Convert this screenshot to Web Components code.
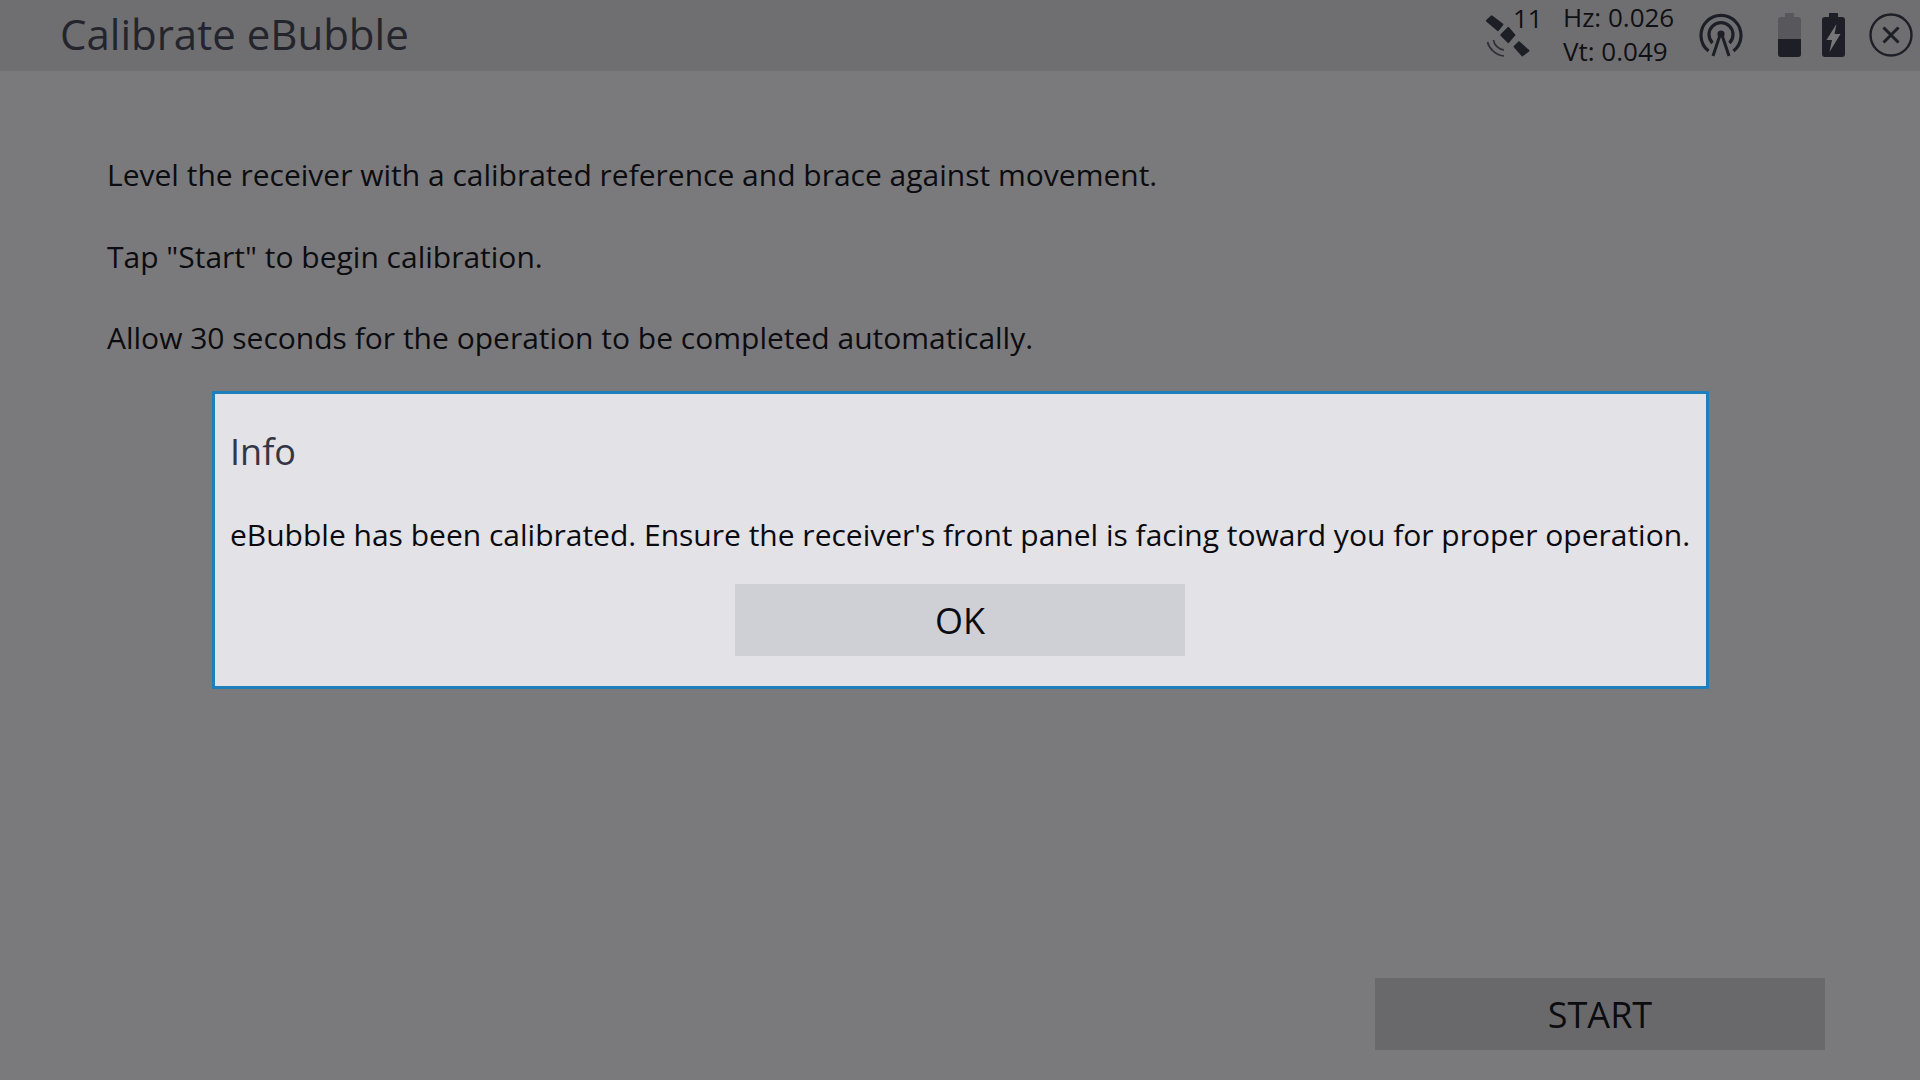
<!DOCTYPE html>
<html>
<head>
<meta charset="utf-8">
<style>
  html, body { margin: 0; height: 100%; background: #7a7a7c; }
  body { font-family: "Open Sans", "Liberation Sans", sans-serif; overflow: hidden; }
</style>
</head>
<body>
<calibrate-page>
  <app-header title="Calibrate eBubble"></app-header>
  <p>Level the receiver with a calibrated reference and brace against movement.</p>
  <p>Tap "Start" to begin calibration.</p>
  <p>Allow 30 seconds for the operation to be completed automatically.</p>
  <flat-button slot="actions" tone="dim">START</flat-button>
  <info-dialog slot="overlay" heading="Info">
    eBubble has been calibrated. Ensure the receiver's front panel is facing toward you for proper operation.
    <flat-button slot="actions" tone="light">OK</flat-button>
  </info-dialog>
</calibrate-page>

<script>
(function () {
    'use strict';

    const pageTemplate = document.createElement('template');
    pageTemplate.innerHTML = `
    <style>
      :host {
        display: flex;
        flex-direction: column;
        position: relative;
        height: 100vh;
        color: #0c0c10;
      }
      .body {
        flex: 1;
        padding: 63px 0 0 107px;
        font-size: 30px;
      }
      ::slotted(p) {
        margin: 0;
        height: 81.5px;
        line-height: 81.5px;
      }
      .actions {
        display: flex;
        justify-content: flex-end;
        padding: 0 95px 30px 0;
      }
    </style>
    <slot name="head"></slot>
    <div class="body"><slot></slot></div>
    <div class="actions"><slot name="actions"></slot></div>
    <slot name="overlay"></slot>
    `;

    class CalibratePage extends HTMLElement {
        constructor() {
            super();
            this.attachShadow({ mode: 'open' }).appendChild(pageTemplate.content.cloneNode(true));
            const header = this.querySelector('app-header');
            if (header) header.slot = 'head';
        }
    }

    const headerTemplate = document.createElement('template');
    headerTemplate.innerHTML = `
    <style>
      :host {
        display: flex;
        align-items: center;
        height: 71px;
        background: #6f6f72;
        color: #24242c;
      }
      .title {
        flex: 1;
        padding-left: 60px;
        font-size: 42px;
        line-height: 71px;
        margin-top: -4px;
      }
      .status {
        display: flex;
        align-items: center;
        color: #0f0f14;
      }
      svg { display: block; flex: none; }
      .sat { position: relative; width: 79px; height: 71px; }
      .sat svg { margin: 15px 0 0 3px; }
      .count {
        position: absolute;
        left: 30px;
        top: 0;
        font-size: 26px;
        line-height: 36px;
      }
      .values {
        font-size: 26px;
        line-height: 34px;
        width: 135px;
        margin: -3px 0 0 1px;
      }
      .gap-a { margin-right: 35px; margin-left: 1px; margin-top: -1px; }
      .gap-b { margin-right: 21px; margin-top: -1px; }
      .gap-c { margin-right: 24px; margin-top: -1px; }
      .gap-d { margin-right: 7px; margin-top: -1px; }
    </style>
    <div class="title"></div>
    <div class="status">
      <div class="sat">
        <svg width="44" height="43" viewBox="0 0 44 43" fill="#1e1e26" stroke="#1e1e26" stroke-width="1.8" stroke-linejoin="round">
          <polygon points="5.7,1.2 16.5,9.5 12,15.2 0.8,5.7"/>
          <polygon points="22.3,12.8 28.5,20 22.3,27.2 15.2,20"/>
          <polygon points="33,27.2 42.5,35.7 36.3,40.5 28.5,31.7"/>
          <path d="M7.5 25 C8 29.5 12 34 18 35" fill="none" stroke="#2f2f36" stroke-width="1.7"/>
          <path d="M1.5 27 C3 33.5 9.5 40 18 41" fill="none" stroke="#2f2f36" stroke-width="1.7"/>
        </svg>
        <span class="count">11</span>
      </div>
      <div class="values"><div>Hz: 0.026</div><div>Vt: 0.049</div></div>
      <svg class="gap-a" width="44" height="44" viewBox="0 0 44 44" fill="none" stroke="#1e1e26" stroke-width="3.2">
        <path d="M9.5 38 A20 20 0 1 1 34.5 38"/>
        <path d="M13.5 30 A12 12 0 1 1 30.5 30"/>
        <circle cx="22" cy="21" r="3.6" fill="#1e1e26" stroke="none"/>
        <path d="M21 22 L14 43 M23 22 L30 43" stroke-width="3"/>
      </svg>
      <svg class="gap-b" width="23" height="44" viewBox="0 0 23 44">
        <path d="M7 0 H16 V4 H20 Q23 4 23 7 V41 Q23 44 20 44 H3 Q0 44 0 41 V7 Q0 4 3 4 H7 Z" fill="#57575c"/>
        <path d="M0 26 H23 V41 Q23 44 20 44 H3 Q0 44 0 41 Z" fill="#1e1e26"/>
      </svg>
      <svg class="gap-c" width="23" height="44" viewBox="0 0 23 44">
        <path d="M7 0 H16 V4 H20 Q23 4 23 7 V41 Q23 44 20 44 H3 Q0 44 0 41 V7 Q0 4 3 4 H7 Z" fill="#1e1e26"/>
        <path d="M14.5 11 L4.5 27 H10 L7.5 39 L18.5 21 H12.5 Z" fill="#77777a"/>
      </svg>
      <svg class="gap-d" width="44" height="44" viewBox="0 0 44 44" fill="none" stroke="#1e1e26">
        <circle cx="22" cy="22" r="20.5" stroke-width="2.4"/>
        <path d="M14.5 14.5 L29.5 29.5 M29.5 14.5 L14.5 29.5" stroke-width="3"/>
      </svg>
    </div>
    `;

    class AppHeader extends HTMLElement {
        constructor() {
            super();
            this.attachShadow({ mode: 'open' }).appendChild(headerTemplate.content.cloneNode(true));
        }

        connectedCallback() {
            this.shadowRoot.querySelector('.title').textContent = this.getAttribute('title') || '';
        }
    }

    const buttonTemplate = document.createElement('template');
    buttonTemplate.innerHTML = `
    <style>
      :host {
        display: flex;
        align-items: center;
        justify-content: center;
        width: 450px;
        height: 72px;
        font-size: 36px;
        color: #0c0c10;
      }
      :host([tone="dim"]) { background: #69696b; }
      :host([tone="light"]) { background: #cfd0d5; }
    </style>
    <slot></slot>
    `;

    class FlatButton extends HTMLElement {
        constructor() {
            super();
            this.attachShadow({ mode: 'open' }).appendChild(buttonTemplate.content.cloneNode(true));
        }
    }

    const dialogTemplate = document.createElement('template');
    dialogTemplate.innerHTML = `
    <style>
      :host {
        display: block;
        position: absolute;
        left: 212px;
        top: 391px;
        width: 1497px;
        height: 298px;
        box-sizing: border-box;
        border: 3px solid #1f7fbb;
        background: #e2e2e7;
        padding: 0 16px 0 15px;
        color: #0a0a10;
      }
      .heading {
        font-size: 36px;
        line-height: 48px;
        margin-top: 34px;
        color: #353545;
      }
      .message {
        font-size: 30px;
        line-height: 40px;
        margin-top: 39px;
        white-space: nowrap;
      }
      .actions {
        display: flex;
        justify-content: center;
        margin-top: 29px;
      }
    </style>
    <div class="heading"></div>
    <div class="message"><slot></slot></div>
    <div class="actions"><slot name="actions"></slot></div>
    `;

    class InfoDialog extends HTMLElement {
        constructor() {
            super();
            this.attachShadow({ mode: 'open' }).appendChild(dialogTemplate.content.cloneNode(true));
        }

        connectedCallback() {
            this.shadowRoot.querySelector('.heading').textContent = this.getAttribute('heading') || '';
        }
    }

    customElements.define('calibrate-page', CalibratePage);
    customElements.define('app-header', AppHeader);
    customElements.define('flat-button', FlatButton);
    customElements.define('info-dialog', InfoDialog);
})();
</script>
</body>
</html>
